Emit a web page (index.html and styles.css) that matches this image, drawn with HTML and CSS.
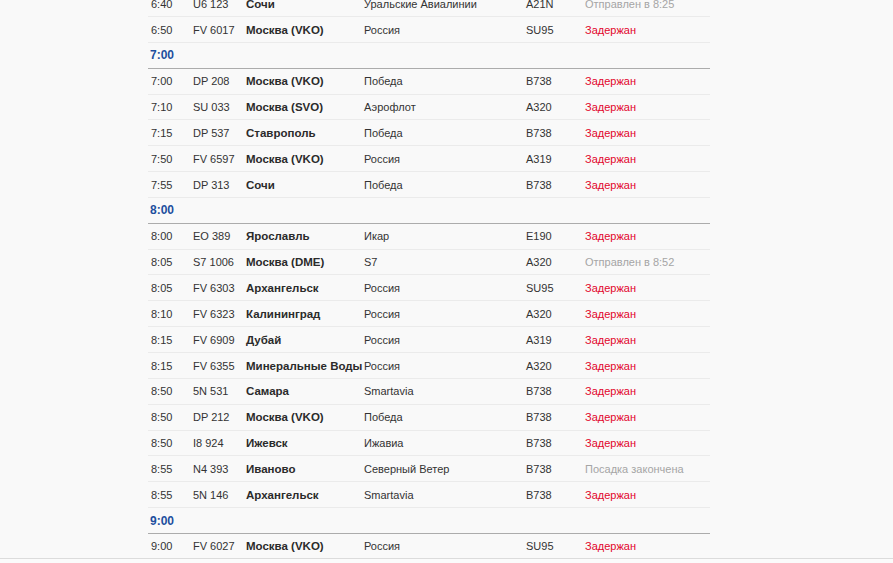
FILE: index.html
```html
<!DOCTYPE html>
<html lang="ru">
<head>
<meta charset="utf-8">
<title>Табло вылета</title>
<link rel="stylesheet" href="styles.css">
</head>
<body>
<div class="page">
  <main class="board">
    <table class="flights">
      <colgroup>
        <col class="c-time"><col class="c-flight"><col class="c-city"><col class="c-airline"><col class="c-plane"><col class="c-status">
      </colgroup>
      <tbody>
        <tr><td>6:40</td><td>U6 123</td><td class="city">Сочи</td><td>Уральские Авиалинии</td><td>A21N</td><td class="st-gray">Отправлен в 8:25</td></tr>
        <tr><td>6:50</td><td>FV 6017</td><td class="city">Москва (VKO)</td><td>Россия</td><td>SU95</td><td class="st-red">Задержан</td></tr>
        <tr class="hour"><td colspan="6">7:00</td></tr>
        <tr><td>7:00</td><td>DP 208</td><td class="city">Москва (VKO)</td><td>Победа</td><td>B738</td><td class="st-red">Задержан</td></tr>
        <tr><td>7:10</td><td>SU 033</td><td class="city">Москва (SVO)</td><td>Аэрофлот</td><td>A320</td><td class="st-red">Задержан</td></tr>
        <tr><td>7:15</td><td>DP 537</td><td class="city">Ставрополь</td><td>Победа</td><td>B738</td><td class="st-red">Задержан</td></tr>
        <tr><td>7:50</td><td>FV 6597</td><td class="city">Москва (VKO)</td><td>Россия</td><td>A319</td><td class="st-red">Задержан</td></tr>
        <tr><td>7:55</td><td>DP 313</td><td class="city">Сочи</td><td>Победа</td><td>B738</td><td class="st-red">Задержан</td></tr>
        <tr class="hour"><td colspan="6">8:00</td></tr>
        <tr><td>8:00</td><td>EO 389</td><td class="city">Ярославль</td><td>Икар</td><td>E190</td><td class="st-red">Задержан</td></tr>
        <tr><td>8:05</td><td>S7 1006</td><td class="city">Москва (DME)</td><td>S7</td><td>A320</td><td class="st-gray">Отправлен в 8:52</td></tr>
        <tr><td>8:05</td><td>FV 6303</td><td class="city">Архангельск</td><td>Россия</td><td>SU95</td><td class="st-red">Задержан</td></tr>
        <tr><td>8:10</td><td>FV 6323</td><td class="city">Калининград</td><td>Россия</td><td>A320</td><td class="st-red">Задержан</td></tr>
        <tr><td>8:15</td><td>FV 6909</td><td class="city">Дубай</td><td>Россия</td><td>A319</td><td class="st-red">Задержан</td></tr>
        <tr><td>8:15</td><td>FV 6355</td><td class="city">Минеральные Воды</td><td>Россия</td><td>A320</td><td class="st-red">Задержан</td></tr>
        <tr><td>8:50</td><td>5N 531</td><td class="city">Самара</td><td>Smartavia</td><td>B738</td><td class="st-red">Задержан</td></tr>
        <tr><td>8:50</td><td>DP 212</td><td class="city">Москва (VKO)</td><td>Победа</td><td>B738</td><td class="st-red">Задержан</td></tr>
        <tr><td>8:50</td><td>I8 924</td><td class="city">Ижевск</td><td>Ижавиа</td><td>B738</td><td class="st-red">Задержан</td></tr>
        <tr><td>8:55</td><td>N4 393</td><td class="city">Иваново</td><td>Северный Ветер</td><td>B738</td><td class="st-gray">Посадка закончена</td></tr>
        <tr><td>8:55</td><td>5N 146</td><td class="city">Архангельск</td><td>Smartavia</td><td>B738</td><td class="st-red">Задержан</td></tr>
        <tr class="hour"><td colspan="6">9:00</td></tr>
        <tr><td>9:00</td><td>FV 6027</td><td class="city">Москва (VKO)</td><td>Россия</td><td>SU95</td><td class="st-red">Задержан</td></tr>
      </tbody>
    </table>
  </main>
  <footer class="bottom"></footer>
</div>
</body>
</html>
```

FILE: styles.css
```css
html, body {
  margin: 0;
  padding: 0;
  background: #f9f9f9;
}

body {
  font-family: "Liberation Sans", Arial, sans-serif;
  font-size: 11px;
  color: #333;
}

.page {
  height: 563px;
  display: flex;
  flex-direction: column;
  overflow: hidden;
}

.board {
  height: 558px;
  flex: none;
  overflow: hidden;
  padding-left: 148px;
}

.bottom {
  flex: 1;
  border-top: 1px solid #dcdcdc;
  background: #fbfbfb;
}

.flights {
  margin-top: -8.8px;
  width: 562px;
  border-collapse: collapse;
  table-layout: fixed;
}

.c-time { width: 42px; }
.c-flight { width: 53px; }
.c-city { width: 118px; }
.c-airline { width: 162px; }
.c-plane { width: 59px; }
.c-status { width: 128px; }

.flights td {
  padding: 4.5px 0 3.5px 3px;
  line-height: 16.85px;
  border-bottom: 1px solid #ebebeb;
  white-space: nowrap;
  vertical-align: middle;
}

.flights td.city {
  font-weight: bold;
  font-size: 11.5px;
  color: #2b2b2b;
}

.st-red { color: #e2062c; }
.st-gray { color: #a5a5a5; }

.flights tr.hour td {
  padding-left: 2px;
  font-size: 12px;
  font-weight: bold;
  color: #1d4f9e;
  border-bottom: 1px solid #acacac;
}
```
